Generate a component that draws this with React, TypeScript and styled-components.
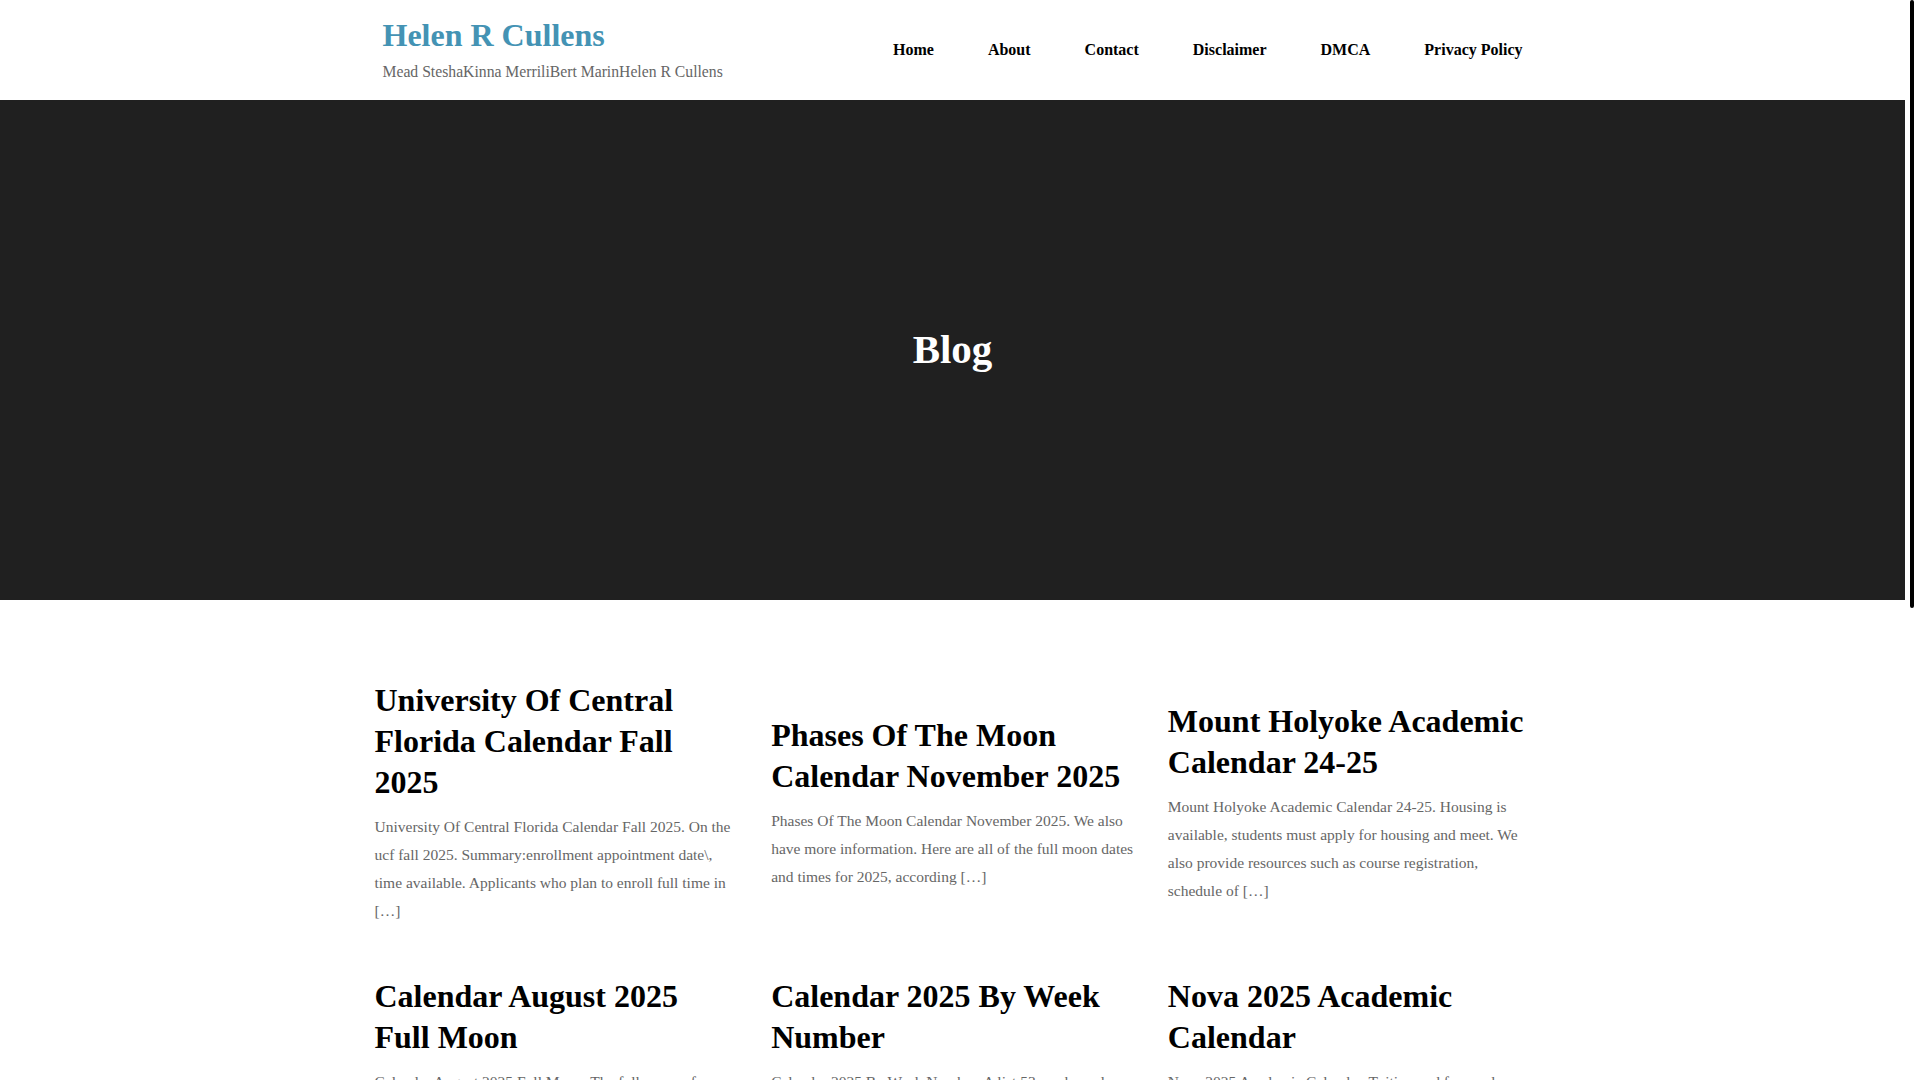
import React from "react";
import styled, { createGlobalStyle } from "styled-components";

type Post = {
    title: string;
    excerpt: string;
};

const posts: Post[] = [
    {
        title: "University Of Central Florida Calendar Fall 2025",
        excerpt:
            "University Of Central Florida Calendar Fall 2025. On the ucf fall 2025. Summary:enrollment appointment date\\, time available. Applicants who plan to enroll full time in […]",
    },
    {
        title: "Phases Of The Moon Calendar November 2025",
        excerpt:
            "Phases Of The Moon Calendar November 2025. We also have more information. Here are all of the full moon dates and times for 2025, according […]",
    },
    {
        title: "Mount Holyoke Academic Calendar 24-25",
        excerpt:
            "Mount Holyoke Academic Calendar 24-25. Housing is available, students must apply for housing and meet. We also provide resources such as course registration, schedule of […]",
    },
    {
        title: "Calendar August 2025 Full Moon",
        excerpt:
            "Calendar August 2025 Full Moon. The full moon of august 2025 is known as the sturgeon moon, and it will reach its peak on […]",
    },
    {
        title: "Calendar 2025 By Week Number",
        excerpt:
            "Calendar 2025 By Week Number. A list 53 weeks and week numbers for the year 2025, with the start and end date of each […]",
    },
    {
        title: "Nova 2025 Academic Calendar",
        excerpt:
            "Nova 2025 Academic Calendar. Tuition and fees and important dates for the fall, spring and summer terms are listed […]",
    },
];

const menu = ["Home", "About", "Contact", "Disclaimer", "DMCA", "Privacy Policy"];

const GlobalStyle = createGlobalStyle`
  * { box-sizing: border-box; }
  body {
    margin: 0 15px 0 0;
    background: #ffffff;
    font-family: "Liberation Serif", "Times New Roman", serif;
    color: #000;
  }
`;

// stand-in for the browser scrollbar seen in the screenshot
const ScrollTrack = styled.div`
  position: fixed;
  top: 0;
  right: 0;
  width: 15px;
  height: 100vh;
  background: #fff;
`;

const ScrollThumb = styled.div`
  margin-left: 5px;
  width: 4px;
  height: 608px;
  border-radius: 2px;
  background: #000;
`;

const Page = styled.div`
  min-height: 1917px;
  display: flex;
  flex-direction: column;
`;

const Header = styled.header`
  height: 100px;
  background: #fff;
`;

const HeaderInner = styled.div`
  max-width: 1170px;
  height: 100%;
  margin: 0 auto;
  padding: 0 15px;
  display: flex;
  justify-content: space-between;
  align-items: flex-start;
`;

const Brand = styled.div`
  padding-top: 16px;
`;

const SiteTitle = styled.a`
  display: block;
  margin: 0 0 7px;
  font-size: 32px;
  line-height: 38px;
  font-weight: 700;
  color: #4493b4;
  text-decoration: none;
`;

const Tagline = styled.p`
  margin: 0;
  font-size: 15.7px;
  line-height: 22px;
  color: #666;
`;

const Nav = styled.nav`
  height: 100%;
  display: flex;
  align-items: center;
  gap: 54px;
`;

const NavLink = styled.a`
  font-size: 16px;
  font-weight: 700;
  color: #000;
  text-decoration: none;
  line-height: 20px;
`;

const Hero = styled.section`
  height: 500px;
  background: #202020;
  display: flex;
  align-items: center;
  justify-content: center;
`;

const HeroTitle = styled.h1`
  margin: 0;
  font-size: 41px;
  font-weight: 700;
  color: #fff;
  line-height: 1.2;
`;

const Main = styled.main`
  flex-grow: 1;
  padding: 80px 0 60px;
`;

const Grid = styled.div`
  max-width: 1190px;
  margin: 0 auto;
  display: grid;
  grid-template-columns: repeat(3, 1fr);
  row-gap: 51px;
  align-items: center;
`;

const Card = styled.article`
  padding: 0 16px 0 17px;
`;

const CardTitle = styled.h2`
  margin: 0 0 10px;
  font-size: 32px;
  line-height: 41px;
  font-weight: 700;
  color: #000;
`;

const Excerpt = styled.p`
  margin: 0;
  font-size: 15.5px;
  line-height: 28px;
  color: #666;
`;

const Footer = styled.footer`
  background: #202020;
  color: #bbb;
  text-align: center;
  font-size: 15px;
  padding: 30px 0;
`;

const App = () => {
    return (
        <Page>
            <GlobalStyle />
            <Header>
                <HeaderInner>
                    <Brand>
                        <SiteTitle href="#">Helen R Cullens</SiteTitle>
                        <Tagline>Mead SteshaKinna MerriliBert MarinHelen R Cullens</Tagline>
                    </Brand>
                    <Nav>
                        {menu.map((item) => (
                            <NavLink key={item} href="#">
                                {item}
                            </NavLink>
                        ))}
                    </Nav>
                </HeaderInner>
            </Header>

            <Hero>
                <HeroTitle>Blog</HeroTitle>
            </Hero>

            <Main>
                <Grid>
                    {posts.map((post) => (
                        <Card key={post.title}>
                            <CardTitle>{post.title}</CardTitle>
                            <Excerpt>{post.excerpt}</Excerpt>
                        </Card>
                    ))}
                </Grid>
            </Main>

            <Footer>Copyright © 2025 Helen R Cullens</Footer>

            <ScrollTrack>
                <ScrollThumb />
            </ScrollTrack>
        </Page>
    );
};

export default App;
